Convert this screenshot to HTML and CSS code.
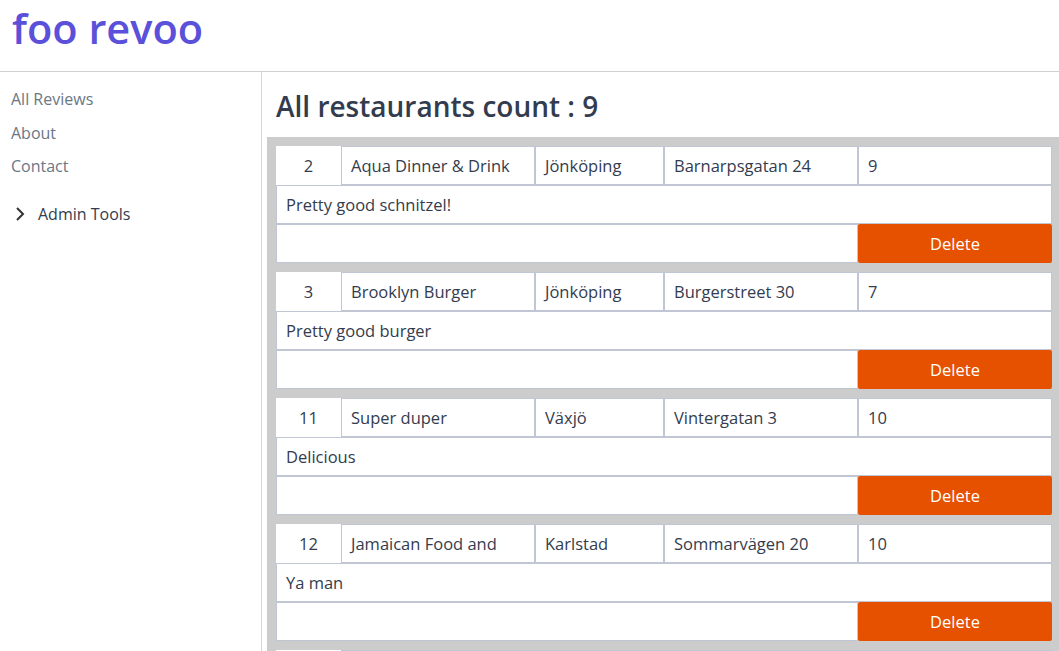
FILE: index.html
```html
<!DOCTYPE html>
<html lang="en">
<head>
<meta charset="utf-8">
<title>foo revoo</title>
<link rel="stylesheet" href="styles.css">
</head>
<body>
<header class="topbar">
  <h1 class="brand">foo revoo</h1>
</header>
<div class="layout">
  <nav class="sidebar">
    <a class="nav-link" href="#">All Reviews</a>
    <a class="nav-link" href="#">About</a>
    <a class="nav-link" href="#">Contact</a>
    <div class="nav-group">
      <svg class="chev" viewBox="0 0 12 16" width="12" height="16"><path d="M3 2l6 6-6 6" fill="none" stroke="#333" stroke-width="2"/></svg>
      <span>Admin Tools</span>
    </div>
  </nav>
  <main class="main">
    <h2 class="count">All restaurants count : 9</h2>
    <div class="list">
      <div class="card">
        <div class="cell id">2</div>
        <div class="cell">Aqua Dinner &amp; Drink</div>
        <div class="cell">Jönköping</div>
        <div class="cell">Barnarpsgatan 24</div>
        <div class="cell">9</div>
        <div class="cell comment">Pretty good schnitzel!</div>
        <div class="cell blank"></div>
        <button class="delete">Delete</button>
      </div>
      <div class="card">
        <div class="cell id">3</div>
        <div class="cell">Brooklyn Burger</div>
        <div class="cell">Jönköping</div>
        <div class="cell">Burgerstreet 30</div>
        <div class="cell">7</div>
        <div class="cell comment">Pretty good burger</div>
        <div class="cell blank"></div>
        <button class="delete">Delete</button>
      </div>
      <div class="card">
        <div class="cell id">11</div>
        <div class="cell">Super duper</div>
        <div class="cell">Växjö</div>
        <div class="cell">Vintergatan 3</div>
        <div class="cell">10</div>
        <div class="cell comment">Delicious</div>
        <div class="cell blank"></div>
        <button class="delete">Delete</button>
      </div>
      <div class="card">
        <div class="cell id">12</div>
        <div class="cell">Jamaican Food and</div>
        <div class="cell">Karlstad</div>
        <div class="cell">Sommarvägen 20</div>
        <div class="cell">10</div>
        <div class="cell comment">Ya man</div>
        <div class="cell blank"></div>
        <button class="delete">Delete</button>
      </div>
      <div class="card">
        <div class="cell id"></div>
        <div class="cell"></div>
        <div class="cell"></div>
        <div class="cell"></div>
        <div class="cell"></div>
      </div>
    </div>
  </main>
</div>
</body>
</html>
```
FILE: styles.css
```css
html, body {
  margin: 0;
  padding: 0;
  overflow: hidden;
  height: 651px;
}
body {
  font-family: "Open Sans", "Noto Sans", sans-serif;
  color: #333c4e;
  background: #fff;
}
.topbar {
  height: 72px;
  border-bottom: 1px solid #d0d0d0;
  box-sizing: border-box;
  display: flex;
  align-items: flex-start;
  padding-left: 12px;
}
.brand {
  margin: 0;
  font-size: 41.5px;
  font-weight: 600;
  color: #5a50da;
  line-height: normal;
}
.layout {
  display: flex;
  height: 579px;
  overflow: hidden;
}
.sidebar {
  width: 262px;
  flex: none;
  border-right: 1px solid #d6d6d6;
  padding: 10px 0 0 11px;
  box-sizing: border-box;
  display: flex;
  flex-direction: column;
}
.nav-link {
  font-size: 16px;
  color: #6b7785;
  text-decoration: none;
  line-height: 34px;
  height: 33.5px;
}
.nav-group {
  display: flex;
  align-items: center;
  margin-top: 20px;
  font-size: 16px;
  color: #333c4e;
}
.chev {
  margin-left: 3px;
  margin-right: 12px;
}
.main {
  flex: 1;
  padding-left: 5px;
  min-width: 0;
  overflow: hidden;
}
.count {
  margin: 0;
  padding: 16px 0 0 9px;
  height: 49px;
  font-size: 28px;
  font-weight: 600;
  color: #333c4e;
  line-height: 36px;
}
.list {
  background: #cccccc;
  padding: 9px;
  width: 776px;
  display: flex;
  flex-direction: column;
  gap: 9px;
}
.card {
  display: grid;
  grid-template-columns: 65px 194px 129px 194px 194px;
  grid-auto-rows: 39px;
}
.cell {
  background: #fff;
  border: 1px solid #c0c6d4;
  box-sizing: border-box;
  font-size: 16.5px;
  padding-left: 9px;
  display: flex;
  align-items: center;
  white-space: nowrap;
  overflow: hidden;
}
.cell.id {
  border: none;
  justify-content: center;
  padding-left: 0;
}
.cell.comment {
  grid-column: 1 / 6;
}
.cell.blank {
  grid-column: 1 / 5;
}
.delete {
  background: #e65100;
  color: #fff;
  border: none;
  border-radius: 2px;
  font-family: inherit;
  font-size: 16.5px;
  cursor: pointer;
}
```
